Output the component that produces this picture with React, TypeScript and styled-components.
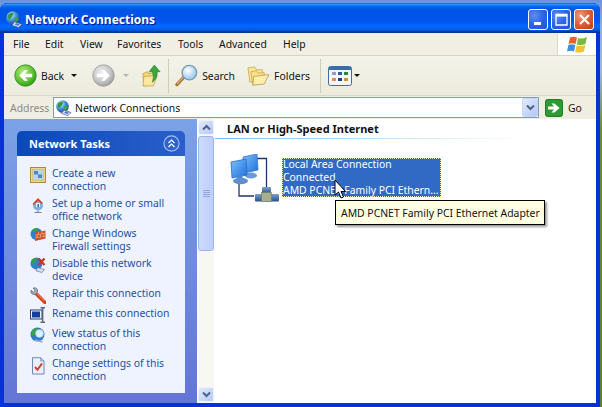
import React from "react";
import styled, { createGlobalStyle } from "styled-components";

const UI_FONT = `"Noto Sans", "DejaVu Sans", sans-serif`;

const GlobalStyle = createGlobalStyle`
  html, body {
    margin: 0;
    padding: 0;
    background: #6d8a34;
    overflow: hidden;
  }
  * {
    box-sizing: border-box;
  }
`;

const Desktop = styled.div`
  width: 602px;
  height: 407px;
  padding-top: 3px;
  background: linear-gradient(to bottom, #6f93da 0, #8fb0e8 30px, #9db9dc 70px, #6d8a34 130px, #5f7f2e 100%);
  font-family: ${UI_FONT};
  font-size: 10.4px;
  color: #000;
  overflow: hidden;
`;

const Win = styled.div`
  width: 600px;
  height: 404px;
  display: flex;
  flex-direction: column;
  background: #0831d9;
  border-radius: 7px 7px 0 0;
  overflow: hidden;
`;

const TitleBar = styled.div`
  height: 30px;
  flex: none;
  display: flex;
  align-items: center;
  padding: 2px 6px 0 6px;
  background: linear-gradient(
    to bottom,
    #0058ee 0%,
    #3593ff 4%,
    #288eff 6%,
    #127dff 8%,
    #036ffc 10%,
    #0262ee 14%,
    #0057e5 20%,
    #0054e3 24%,
    #0055eb 56%,
    #005bf5 66%,
    #026afe 76%,
    #0062ef 86%,
    #0052d6 92%,
    #0040ab 94%,
    #003092 100%
  );
`;

const TitleText = styled.div`
  margin-left: 2px;
  flex: 1;
  font-family: "Noto Sans", sans-serif;
  font-weight: 700;
  font-size: 12px;
  color: #fff;
  text-shadow: 1px 1px 1px #0f1089;
`;

const WinControls = styled.div`
  display: flex;
  gap: 3px;
`;

const WinBtn = styled.div<{ $close?: boolean }>`
  width: 20px;
  height: 21px;
  border: 1px solid #fff;
  border-radius: 3px;
  display: flex;
  align-items: center;
  justify-content: center;
  background: ${({ $close }) =>
    $close
      ? "radial-gradient(circle at 30% 30%, #ee9a7c 0, #e0603a 45%, #c23a16 100%)"
      : "radial-gradient(circle at 30% 30%, #5f8df5 0, #2a62e8 50%, #2350d8 100%)"};
`;

const Body = styled.div`
  flex: 1;
  min-height: 0;
  margin: 0 4px 4px;
  display: flex;
  flex-direction: column;
  background: #fff;
`;

const MenuBar = styled.div`
  height: 23px;
  flex: none;
  display: flex;
  align-items: center;
  background: #f1efe3;
  border-bottom: 1px solid #d8d4c2;
  padding-left: 9px;
  position: relative;
`;

const MenuItem = styled.span<{ $width: number }>`
  width: ${({ $width }) => $width}px;
  color: #111;
  padding-bottom: 1px;
`;

const FlagBox = styled.div`
  margin-left: auto;
  width: 39px;
  height: 22px;
  background: #fff;
  border-left: 1px solid #ded9c8;
  display: flex;
  align-items: center;
  justify-content: center;
`;

const Toolbar = styled.div`
  height: 40px;
  flex: none;
  display: flex;
  align-items: center;
  padding-left: 10px;
  background: linear-gradient(to bottom, #f4f3ea, #ecebdd);
  border-bottom: 1px solid #dcd8c6;
`;

const ToolLabel = styled.span`
  margin-left: 4px;
  color: #111;
`;

const ToolIconWrap = styled.span<{ $left?: number }>`
  display: flex;
  margin-left: ${({ $left }) => $left ?? 0}px;
`;

const Caret = styled.span<{ $left: number; $muted?: boolean }>`
  margin-left: ${({ $left }) => $left}px;
  width: 0;
  height: 0;
  border-left: 3px solid transparent;
  border-right: 3px solid transparent;
  border-top: 3px solid ${({ $muted }) => ($muted ? "#b9b7ab" : "#111")};
`;

const ToolSep = styled.span<{ $left: number }>`
  width: 1px;
  height: 34px;
  background: #cfccb8;
  margin-left: ${({ $left }) => $left}px;
`;

const AddressBar = styled.div`
  height: 23px;
  flex: none;
  display: flex;
  align-items: center;
  padding-left: 6px;
  background: #efeee1;
`;

const AddressLabel = styled.span`
  width: 43px;
  color: #8a8a80;
`;

const AddressInput = styled.div`
  width: 486px;
  height: 21px;
  display: flex;
  align-items: center;
  background: #fff;
  border: 1px solid #7f9db9;
  padding-left: 2px;
  gap: 3px;
`;

const AddressText = styled.span`
  flex: 1;
  color: #111;
`;

const ComboButton = styled.div`
  width: 16px;
  height: 19px;
  display: flex;
  align-items: center;
  justify-content: center;
  background: linear-gradient(135deg, #e1eafe, #b4c8f6);
  border: 1px solid #c7d6f8;
  border-radius: 2px;
`;

const GoWrap = styled.div`
  display: flex;
  align-items: center;
  margin-left: 6px;
  gap: 5px;
  color: #111;
`;

const Content = styled.div`
  flex: 1;
  min-height: 0;
  display: flex;
  position: relative;
`;

const SidePanel = styled.aside`
  width: 193px;
  flex: none;
  padding: 12px 12px 10px 13px;
  background: linear-gradient(to bottom, #7ba2e7, #6375d6);
`;

const TaskHeader = styled.div`
  height: 25px;
  display: flex;
  align-items: center;
  justify-content: space-between;
  padding: 0 5px 0 12px;
  border-radius: 5px 5px 0 0;
  background: linear-gradient(to right, #0a49b8, #2a5fcb);
  color: #fff;
  font-weight: 700;
  font-size: 11px;
`;

const TaskList = styled.div`
  height: 237px;
  padding: 11px 4px 0 13px;
  background: #eff3ff;
  display: flex;
  flex-direction: column;
  gap: 4px;
`;

const TaskRow = styled.div`
  display: flex;
  gap: 6px;
  line-height: 13px;
`;

const TaskIconBox = styled.span`
  width: 16px;
  height: 16px;
  flex: none;
  display: flex;
`;

const TaskLabel = styled.span`
  color: #1c4f9f;
`;

const ScrollTrack = styled.div`
  width: 16px;
  flex: none;
  margin-left: 1px;
  padding-top: 1px;
  display: flex;
  flex-direction: column;
  background: #f8f8f2;
`;

const ScrollBtn = styled.div<{ $bottom?: boolean }>`
  height: 15px;
  flex: none;
  margin-top: ${({ $bottom }) => ($bottom ? "auto" : "0")};
  margin-bottom: ${({ $bottom }) => ($bottom ? "1px" : "0")};
  display: flex;
  align-items: center;
  justify-content: center;
  background: linear-gradient(135deg, #e1eafe, #b4c8f6);
  border: 1px solid #eef3fe;
  border-radius: 2px;
`;

const ScrollThumb = styled.div`
  height: 115px;
  flex: none;
  margin-top: 1px;
  display: flex;
  flex-direction: column;
  align-items: center;
  justify-content: center;
  gap: 1px;
  background: linear-gradient(to right, #cddafc, #c0cffb);
  border: 1px solid #9db4e8;
  border-radius: 3px;
`;

const Grip = styled.span`
  width: 7px;
  height: 1px;
  background: #8ba6e0;
`;

const MainPane = styled.main`
  flex: 1;
  min-width: 0;
  background: #fff;
  padding-left: 1px;
  position: relative;
`;

const GroupHeading = styled.div`
  height: 19px;
  padding: 2px 0 0 12px;
  font-weight: 700;
  font-size: 11px;
  line-height: 15px;
  color: #111;
`;

const GroupRule = styled.div`
  width: 310px;
  height: 1px;
  background: linear-gradient(to right, #70bfff, #ffffff);
`;

const Tile = styled.div`
  display: flex;
  padding: 15px 0 0 15px;
`;

const TileIcon = styled.span`
  width: 52px;
  flex: none;
  display: flex;
`;

const TileText = styled.div`
  width: 159px;
  height: 39px;
  margin-top: 4px;
  padding-left: 1px;
  background: #316ac5;
  outline: 1px dotted #e8e4b0;
  outline-offset: -1px;
  color: #fff;
  line-height: 13px;
  white-space: nowrap;
  overflow: hidden;
`;

const Tooltip = styled.div`
  position: absolute;
  left: 121px;
  top: 81px;
  width: 210px;
  height: 25px;
  display: flex;
  align-items: center;
  padding-left: 5px;
  background: #ffffe1;
  border: 1px solid #000;
  box-shadow: 2px 2px 2px rgba(0, 0, 0, 0.4);
  color: #111;
  white-space: nowrap;
`;

const CursorMark = styled.svg`
  position: absolute;
  left: 120px;
  top: 60px;
`;

const WindowsFlag = () => (
  <svg width="21" height="19" viewBox="0 0 21 19">
    <path d="M3 2.5 Q6 1 10 2.5 L8.6 9 Q5 7.5 1.6 9 Z" fill="#e8602c" />
    <path d="M11 3 Q15 4.5 20 2 L18.5 9 Q14 11 9.8 9.5 Z" fill="#7cb842" />
    <path d="M1.4 10 Q5 8.6 8.4 10 L7 16.5 Q3.5 15 0 16.5 Z" fill="#3f8ee0" />
    <path d="M9.6 10.4 Q14 12 18.3 10 L17 16.5 Q12.5 18.5 8.2 17 Z" fill="#f2c230" />
  </svg>
);

const GlobeNet = ({ size, id }: { size: number; id: string }) => (
  <svg width={size} height={size} viewBox="0 0 16 16">
    <defs>
      <radialGradient id={id} cx="0.35" cy="0.3" r="0.8">
        <stop offset="0" stopColor="#cfeaff" />
        <stop offset="0.5" stopColor="#3f8fdc" />
        <stop offset="1" stopColor="#0d3f94" />
      </radialGradient>
    </defs>
    <circle cx="6.5" cy="6.5" r="6.3" fill={`url(#${id})`} />
    <path d="M2 3.5 Q5 1 7 2 L6 5 Q4 8 2.5 8 Q0.8 6 2 3.5Z" fill="#2f9a3c" />
    <path d="M8 6 Q11 5 12 8 L9 11 Q7.5 9 8 6Z" fill="#3aa548" />
    <path d="M8 10 L15 12.5 L12 15.6 L5.5 13.4 Z" fill="#dfe4f2" stroke="#48557f" strokeWidth="0.7" />
    <path d="M9.5 11.2 L13 12.5 L11.6 14 L8 12.8 Z" fill="#4c7bd8" />
  </svg>
);

const BackIcon = ({ id, muted }: { id: string; muted?: boolean }) => (
  <svg width="23" height="23" viewBox="0 0 24 24">
    <defs>
      <radialGradient id={id} cx="0.4" cy="0.35" r="0.75">
        <stop offset="0" stopColor={muted ? "#eeeeee" : "#b9ec80"} />
        <stop offset="0.6" stopColor={muted ? "#c4c4c4" : "#5cc02f"} />
        <stop offset="1" stopColor={muted ? "#8e8e8e" : "#1f8a18"} />
      </radialGradient>
    </defs>
    <circle cx="12" cy="12" r="11.2" fill={`url(#${id})`} stroke={muted ? "#9a9a9a" : "#2a8f22"} strokeWidth="0.8" />
    <path
      d={muted ? "M5 10.2H12.5L9.5 6.5H13.2L18.5 12L13.2 17.5H9.5L12.5 13.8H5Z" : "M19 10.2H11.5L14.5 6.5H10.8L5.5 12L10.8 17.5H14.5L11.5 13.8H19Z"}
      fill="#fff"
    />
  </svg>
);

const UpFolder = () => (
  <svg width="19" height="23" viewBox="0 0 20 24">
    <path d="M1 10 L6 8 L7 10 L13 9 L12 22 L2 23 Z" fill="#f5d878" stroke="#b79233" strokeWidth="0.7" />
    <path d="M2 13 L16 12 L12 23 L1 23 Z" fill="#fbe7a0" stroke="#bd9a3e" strokeWidth="0.7" />
    <path d="M13 1 L19 8 H16 Q16.5 15 11 19 Q13 13 11 8 H7.5 Z" fill="#38a83a" stroke="#1d7a25" strokeWidth="0.6" />
  </svg>
);

const SearchIcon = () => (
  <svg width="23" height="24" viewBox="0 0 24 25">
    <defs>
      <radialGradient id="lensFill" cx="0.4" cy="0.35" r="0.7">
        <stop offset="0" stopColor="#ffffff" />
        <stop offset="1" stopColor="#8cc4ee" />
      </radialGradient>
    </defs>
    <path d="M9 14 L2 21.5" stroke="#a5702f" strokeWidth="3.4" strokeLinecap="round" />
    <path d="M8.5 14 L2.5 20.5" stroke="#eab27a" strokeWidth="1.2" strokeLinecap="round" />
    <circle cx="15" cy="9" r="7.6" fill="url(#lensFill)" stroke="#7d9cb8" strokeWidth="1.4" />
  </svg>
);

const FoldersIcon = () => (
  <svg width="23" height="21" viewBox="0 0 24 22">
    <path d="M1 3 L8 2 L10 5 L16 5 L16 16 L3 18 Z" fill="#fce79b" stroke="#c5a24a" strokeWidth="0.8" />
    <path d="M4 7 L10 6 L11.5 8.5 L18 8 L18 19 L6 21 Z" fill="#fbe08a" stroke="#c5a24a" strokeWidth="0.8" />
    <path d="M7 12 L23 10 L18 20 L6 21 Z" fill="#fdeeb0" stroke="#bd9a3e" strokeWidth="0.8" />
  </svg>
);

const ViewsIcon = () => (
  <svg width="24" height="20" viewBox="0 0 24 20">
    <rect x="0.5" y="0.5" width="23" height="19" rx="2" fill="#f4f7fb" stroke="#3a6ea5" />
    <rect x="1" y="1" width="22" height="3" fill="#3a6ea5" />
    <rect x="4" y="6" width="4" height="3" fill="#9a9ac8" />
    <rect x="10" y="6" width="4" height="3" fill="#2a5aa8" />
    <rect x="16" y="6" width="4" height="3" fill="#2a8a3a" />
    <rect x="4" y="12" width="4" height="3" fill="#e08a6a" />
    <rect x="10" y="12" width="4" height="3" fill="#1f3f80" />
    <rect x="16" y="12" width="4" height="3" fill="#c09a40" />
  </svg>
);

const GoIcon = () => (
  <svg width="18" height="18" viewBox="0 0 18 18">
    <rect x="0.5" y="0.5" width="17" height="17" rx="2" fill="#2f9a33" stroke="#1f7d25" />
    <path d="M3 7.5H9L6.5 4.5H9.5L14.5 9L9.5 13.5H6.5L9 10.5H3Z" fill="#fff" />
  </svg>
);

const Chevron = ({ up, color = "#4d6185" }: { up?: boolean; color?: string }) => (
  <svg width="9" height="7" viewBox="0 0 9 7">
    <path d={up ? "M1 5.5L4.5 2L8 5.5" : "M1 1.5L4.5 5L8 1.5"} fill="none" stroke={color} strokeWidth="2" />
  </svg>
);

const CollapseIcon = () => (
  <svg width="17" height="17" viewBox="0 0 17 17">
    <circle cx="8.5" cy="8.5" r="7.6" fill="#2e64cc" stroke="#a9c2f2" strokeWidth="1.1" />
    <path d="M5.5 8L8.5 5L11.5 8M5.5 12L8.5 9L11.5 12" fill="none" stroke="#fff" strokeWidth="1.2" />
  </svg>
);

const NewConnIcon = () => (
  <svg width="16" height="16" viewBox="0 0 16 16">
    <rect x="0.5" y="0.5" width="15" height="15" fill="#efd68a" stroke="#a98a3a" />
    <rect x="2.5" y="2.5" width="11" height="11" fill="#b9d3ec" stroke="#d9c27a" />
    <rect x="4" y="4" width="4" height="3.5" fill="#4b86cf" />
    <rect x="8" y="7.5" width="4" height="3.5" fill="#4b86cf" />
  </svg>
);

const HomeNetIcon = () => (
  <svg width="16" height="16" viewBox="0 0 16 16">
    <circle cx="8" cy="8.5" r="5" fill="#7fb0de" />
    <path d="M8 13.5V15.5M4.5 15.5H11.5" stroke="#77808f" strokeWidth="1.2" />
    <path d="M2.5 7 L8 1 L13 6 L11.5 7 L8 3.8 L4 7.8 Z" fill="#d2452a" />
    <rect x="6" y="6" width="4" height="4" fill="#f6efe0" />
    <rect x="7.4" y="7" width="1.6" height="3" fill="#3e6fb6" />
  </svg>
);

const FirewallIcon = () => (
  <svg width="16" height="16" viewBox="0 0 16 16">
    <circle cx="6.5" cy="7" r="6" fill="#2f7fd0" />
    <path d="M3 2.6 Q6 0.4 9 2 L7 5 H2Z" fill="#35a043" />
    <path d="M5 5.5 L15.5 3.5 V11.5 L5 14Z" fill="#c9502a" />
    <path d="M5 8.2 L15.5 6.2M5 11 L15.5 9M8.5 5V7.6M12 4.3V7M7 8V10.6M10.5 7.3V10M13.8 6.6V9.3" stroke="#f3b27c" strokeWidth="0.7" fill="none" />
  </svg>
);

const DisableIcon = () => (
  <svg width="16" height="16" viewBox="0 0 16 16">
    <circle cx="6.5" cy="6.5" r="6" fill="#2f7fd0" />
    <path d="M1.5 4 Q4 0.5 7 1 L6 5 L2 8Z" fill="#35a043" />
    <path d="M7.5 10.5 L14.5 12.5 L12 15.5 L6 13.8Z" fill="#d9deec" stroke="#55618a" strokeWidth="0.6" />
    <path d="M8.5 1.5L14.5 8M14.5 1.5L8.5 8" stroke="#d7301f" strokeWidth="2.3" />
  </svg>
);

const RepairIcon = () => (
  <svg width="16" height="17" viewBox="0 0 16 17">
    <path d="M15 15.5 L6 6.5" stroke="#d8401f" strokeWidth="3.6" strokeLinecap="round" />
    <path d="M14.5 14 L6.5 6" stroke="#f59b73" strokeWidth="0.9" />
    <path d="M1 3.2 L3.4 5.2 L5 3.6 L3.2 1 Q6.4 0 7.4 2.6 Q8 4.4 7 5.8 L5.6 7.2 Q3.6 8 1.8 6.8 Q0.4 5.4 1 3.2Z" fill="#a6adb6" stroke="#59606b" strokeWidth="0.7" />
  </svg>
);

const RenameIcon = () => (
  <svg width="16" height="16" viewBox="0 0 16 16">
    <rect x="0.5" y="3" width="11.5" height="9" fill="#eef1f8" stroke="#28406f" />
    <rect x="2" y="4.5" width="8" height="6" fill="#123f9e" />
    <path d="M10.5 0.7H15M10.5 15.3H15M12.7 0.7V15.3" stroke="#5f6675" strokeWidth="1.4" fill="none" />
  </svg>
);

const StatusIcon = () => (
  <svg width="16" height="16" viewBox="0 0 16 16">
    <circle cx="7.5" cy="7.5" r="7" fill="#2a7bc8" />
    <path d="M1.5 6 Q2.5 1.5 7 0.8 L8 3.5 L4 8 L2 9Z" fill="#38a53f" />
    <circle cx="9.5" cy="6.5" r="4" fill="#dcefff" stroke="#9cc0de" strokeWidth="0.7" />
    <path d="M5 13 L12.5 15" stroke="#a2a9bd" strokeWidth="1.8" />
  </svg>
);

const SettingsIcon = () => (
  <svg width="16" height="18" viewBox="0 0 16 18">
    <path d="M2.5 0.7H10.5L14 4V17H2.5Z" fill="#e9effa" stroke="#7088b5" />
    <path d="M10.5 0.7V4H14Z" fill="#bccdea" stroke="#7088b5" strokeWidth="0.6" />
    <path d="M5 10L7.5 12.8L12 6.5" fill="none" stroke="#d7362a" strokeWidth="1.9" />
  </svg>
);

const LanIcon = () => (
  <svg width="52" height="50" viewBox="0 0 52 50">
    <defs>
      <linearGradient id="lanScreen" x1="0" y1="0" x2="1" y2="1">
        <stop offset="0" stopColor="#7cc0fb" />
        <stop offset="1" stopColor="#1c6fe0" />
      </linearGradient>
      <linearGradient id="lanPipe" x1="0" y1="0" x2="0" y2="1">
        <stop offset="0" stopColor="#7d9fcc" />
        <stop offset="1" stopColor="#274f8c" />
      </linearGradient>
    </defs>
    <path d="M26 4.5H36.5V36M9 26V42H24" fill="none" stroke="#22356e" strokeWidth="1.3" />
    <path d="M13 3 L27 0 L28 16 L14 19 Z" fill="url(#lanScreen)" stroke="#3a74c4" strokeWidth="0.8" />
    <ellipse cx="21" cy="21.5" rx="6" ry="3" fill="#6a9ad8" />
    <path d="M1 8 L16 5 L17 21 L2 24 Z" fill="url(#lanScreen)" stroke="#2f68b8" strokeWidth="0.8" />
    <path d="M7 22 L12 21 L13 25 L7 26Z" fill="#4f86cf" />
    <ellipse cx="10.5" cy="27" rx="7.5" ry="3.2" fill="#5d8fd3" />
    <rect x="25" y="40" width="24" height="7.5" rx="1" fill="url(#lanPipe)" />
    <rect x="32" y="33" width="9" height="7" rx="1" fill="url(#lanPipe)" />
    <rect x="31.5" y="38.5" width="10" height="9" fill="#a7ae8e" stroke="#6f7a66" strokeWidth="0.6" />
  </svg>
);

const tasks: { icon: React.ReactNode; label: React.ReactNode }[] = [
  { icon: <NewConnIcon />, label: <>Create a new<br />connection</> },
  { icon: <HomeNetIcon />, label: <>Set up a home or small<br />office network</> },
  { icon: <FirewallIcon />, label: <>Change Windows<br />Firewall settings</> },
  { icon: <DisableIcon />, label: <>Disable this network<br />device</> },
  { icon: <RepairIcon />, label: "Repair this connection" },
  { icon: <RenameIcon />, label: "Rename this connection" },
  { icon: <StatusIcon />, label: <>View status of this<br />connection</> },
  { icon: <SettingsIcon />, label: <>Change settings of this<br />connection</> },
];

const menus: [string, number][] = [
  ["File", 32],
  ["Edit", 35],
  ["View", 37],
  ["Favorites", 61],
  ["Tools", 41],
  ["Advanced", 64],
  ["Help", 30],
];

export default function App() {
  return (
    <>
      <GlobalStyle />
      <Desktop>
        <Win>
          <TitleBar>
            <GlobeNet size={17} id="titleGlobe" />
            <TitleText>Network Connections</TitleText>
            <WinControls>
              <WinBtn>
                <svg width="13" height="13" viewBox="0 0 13 13">
                  <rect x="2" y="9" width="7" height="3" fill="#fff" />
                </svg>
              </WinBtn>
              <WinBtn>
                <svg width="13" height="13" viewBox="0 0 13 13">
                  <path d="M1 1.5H12V12H1Z M1 2.5H12" fill="none" stroke="#fff" strokeWidth="1.3" />
                  <rect x="1" y="1" width="11" height="2.5" fill="#fff" />
                </svg>
              </WinBtn>
              <WinBtn $close>
                <svg width="13" height="13" viewBox="0 0 13 13">
                  <path d="M2 2L11 11M11 2L2 11" stroke="#fff" strokeWidth="2" />
                </svg>
              </WinBtn>
            </WinControls>
          </TitleBar>
          <Body>
            <MenuBar>
              {menus.map(([name, width]) => (
                <MenuItem key={name} $width={width}>
                  {name}
                </MenuItem>
              ))}
              <FlagBox>
                <WindowsFlag />
              </FlagBox>
            </MenuBar>
            <Toolbar>
              <BackIcon id="backFill" />
              <ToolLabel>Back</ToolLabel>
              <Caret $left={7} />
              <ToolIconWrap $left={15}>
                <BackIcon id="forwardFill" muted />
              </ToolIconWrap>
              <Caret $left={8} $muted />
              <ToolIconWrap $left={13}>
                <UpFolder />
              </ToolIconWrap>
              <ToolSep $left={7} />
              <ToolIconWrap $left={6}>
                <SearchIcon />
              </ToolIconWrap>
              <ToolLabel>Search</ToolLabel>
              <ToolIconWrap $left={12}>
                <FoldersIcon />
              </ToolIconWrap>
              <ToolLabel>Folders</ToolLabel>
              <ToolSep $left={10} />
              <ToolIconWrap $left={7}>
                <ViewsIcon />
              </ToolIconWrap>
              <Caret $left={2} />
            </Toolbar>
            <AddressBar>
              <AddressLabel>Address</AddressLabel>
              <AddressInput>
                <GlobeNet size={16} id="addrGlobe" />
                <AddressText>Network Connections</AddressText>
                <ComboButton>
                  <Chevron color="#4d6185" />
                </ComboButton>
              </AddressInput>
              <GoWrap>
                <GoIcon />
                <span>Go</span>
              </GoWrap>
            </AddressBar>
            <Content>
              <SidePanel>
                <TaskHeader>
                  <span>Network Tasks</span>
                  <CollapseIcon />
                </TaskHeader>
                <TaskList>
                  {tasks.map((task, i) => (
                    <TaskRow key={i}>
                      <TaskIconBox>{task.icon}</TaskIconBox>
                      <TaskLabel>{task.label}</TaskLabel>
                    </TaskRow>
                  ))}
                </TaskList>
              </SidePanel>
              <ScrollTrack>
                <ScrollBtn>
                  <Chevron up />
                </ScrollBtn>
                <ScrollThumb>
                  <Grip />
                  <Grip />
                  <Grip />
                  <Grip />
                </ScrollThumb>
                <ScrollBtn $bottom>
                  <Chevron />
                </ScrollBtn>
              </ScrollTrack>
              <MainPane>
                <GroupHeading>LAN or High-Speed Internet</GroupHeading>
                <GroupRule />
                <Tile>
                  <TileIcon>
                    <LanIcon />
                  </TileIcon>
                  <TileText>
                    Local Area Connection
                    <br />
                    Connected
                    <br />
                    AMD PCNET Family PCI Ethern...
                  </TileText>
                </Tile>
                <CursorMark width="14" height="21" viewBox="0 0 14 21">
                  <path d="M1 1V16L4.5 13L7 19L9.5 18L7 12.5H11.5Z" fill="#fff" stroke="#000" strokeWidth="1" />
                </CursorMark>
                <Tooltip>AMD PCNET Family PCI Ethernet Adapter</Tooltip>
              </MainPane>
            </Content>
          </Body>
        </Win>
      </Desktop>
    </>
  );
}
